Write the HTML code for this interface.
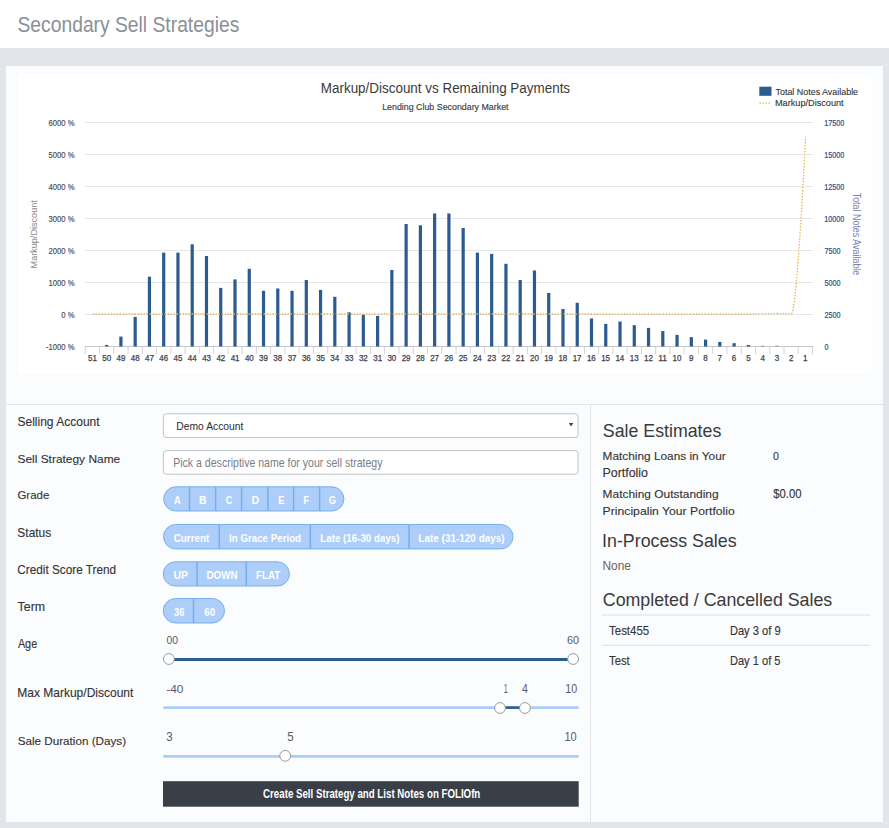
<!DOCTYPE html>
<html><head><meta charset="utf-8"><title>Secondary Sell Strategies</title>
<style>
html,body{margin:0;padding:0;background:#e4e5ea;width:889px;height:828px;overflow:hidden}
svg text{font-family:"Liberation Sans",sans-serif}
</style></head><body>
<svg width="889" height="828" viewBox="0 0 889 828" style="display:block">
<rect x="0" y="0" width="889" height="828" fill="#e4e5ea"/>
<rect x="0" y="0" width="889" height="48" fill="#ffffff"/>
<rect x="6" y="66" width="877" height="756" fill="#fbfcfe"/>
<rect x="18" y="74" width="853.5" height="300" fill="#ffffff"/>
<rect x="6" y="404" width="877" height="1" fill="#e2e4e9"/>
<rect x="590" y="405" width="1" height="417" fill="#e2e4e9"/>
<text x="17.52" y="31.50" font-size="21.37" fill="#8b9097" textLength="221.77" lengthAdjust="spacingAndGlyphs">Secondary Sell Strategies</text>
<rect x="85.27" y="122.00" width="727.53" height="1" fill="#e6e6e6"/>
<rect x="85.27" y="154.00" width="727.53" height="1" fill="#e6e6e6"/>
<rect x="85.27" y="186.00" width="727.53" height="1" fill="#e6e6e6"/>
<rect x="85.27" y="218.00" width="727.53" height="1" fill="#e6e6e6"/>
<rect x="85.27" y="250.00" width="727.53" height="1" fill="#e6e6e6"/>
<rect x="85.27" y="282.00" width="727.53" height="1" fill="#e6e6e6"/>
<rect x="85.27" y="314.00" width="727.53" height="1" fill="#e6e6e6"/>
<rect x="84.77" y="346" width="728.53" height="1" fill="#c4c6cc"/>
<rect x="84.77" y="347" width="1" height="7" fill="#d2d4da"/>
<rect x="99.03" y="347" width="1" height="7" fill="#d2d4da"/>
<rect x="113.29" y="347" width="1" height="7" fill="#d2d4da"/>
<rect x="127.55" y="347" width="1" height="7" fill="#d2d4da"/>
<rect x="141.81" y="347" width="1" height="7" fill="#d2d4da"/>
<rect x="156.07" y="347" width="1" height="7" fill="#d2d4da"/>
<rect x="170.33" y="347" width="1" height="7" fill="#d2d4da"/>
<rect x="184.59" y="347" width="1" height="7" fill="#d2d4da"/>
<rect x="198.85" y="347" width="1" height="7" fill="#d2d4da"/>
<rect x="213.11" y="347" width="1" height="7" fill="#d2d4da"/>
<rect x="227.37" y="347" width="1" height="7" fill="#d2d4da"/>
<rect x="241.63" y="347" width="1" height="7" fill="#d2d4da"/>
<rect x="255.89" y="347" width="1" height="7" fill="#d2d4da"/>
<rect x="270.15" y="347" width="1" height="7" fill="#d2d4da"/>
<rect x="284.41" y="347" width="1" height="7" fill="#d2d4da"/>
<rect x="298.67" y="347" width="1" height="7" fill="#d2d4da"/>
<rect x="312.93" y="347" width="1" height="7" fill="#d2d4da"/>
<rect x="327.19" y="347" width="1" height="7" fill="#d2d4da"/>
<rect x="341.45" y="347" width="1" height="7" fill="#d2d4da"/>
<rect x="355.71" y="347" width="1" height="7" fill="#d2d4da"/>
<rect x="369.97" y="347" width="1" height="7" fill="#d2d4da"/>
<rect x="384.23" y="347" width="1" height="7" fill="#d2d4da"/>
<rect x="398.49" y="347" width="1" height="7" fill="#d2d4da"/>
<rect x="412.75" y="347" width="1" height="7" fill="#d2d4da"/>
<rect x="427.01" y="347" width="1" height="7" fill="#d2d4da"/>
<rect x="441.27" y="347" width="1" height="7" fill="#d2d4da"/>
<rect x="455.53" y="347" width="1" height="7" fill="#d2d4da"/>
<rect x="469.79" y="347" width="1" height="7" fill="#d2d4da"/>
<rect x="484.05" y="347" width="1" height="7" fill="#d2d4da"/>
<rect x="498.31" y="347" width="1" height="7" fill="#d2d4da"/>
<rect x="512.57" y="347" width="1" height="7" fill="#d2d4da"/>
<rect x="526.83" y="347" width="1" height="7" fill="#d2d4da"/>
<rect x="541.09" y="347" width="1" height="7" fill="#d2d4da"/>
<rect x="555.35" y="347" width="1" height="7" fill="#d2d4da"/>
<rect x="569.61" y="347" width="1" height="7" fill="#d2d4da"/>
<rect x="583.87" y="347" width="1" height="7" fill="#d2d4da"/>
<rect x="598.13" y="347" width="1" height="7" fill="#d2d4da"/>
<rect x="612.39" y="347" width="1" height="7" fill="#d2d4da"/>
<rect x="626.65" y="347" width="1" height="7" fill="#d2d4da"/>
<rect x="640.91" y="347" width="1" height="7" fill="#d2d4da"/>
<rect x="655.17" y="347" width="1" height="7" fill="#d2d4da"/>
<rect x="669.43" y="347" width="1" height="7" fill="#d2d4da"/>
<rect x="683.69" y="347" width="1" height="7" fill="#d2d4da"/>
<rect x="697.95" y="347" width="1" height="7" fill="#d2d4da"/>
<rect x="712.21" y="347" width="1" height="7" fill="#d2d4da"/>
<rect x="726.47" y="347" width="1" height="7" fill="#d2d4da"/>
<rect x="740.73" y="347" width="1" height="7" fill="#d2d4da"/>
<rect x="754.99" y="347" width="1" height="7" fill="#d2d4da"/>
<rect x="769.25" y="347" width="1" height="7" fill="#d2d4da"/>
<rect x="783.51" y="347" width="1" height="7" fill="#d2d4da"/>
<rect x="797.77" y="347" width="1" height="7" fill="#d2d4da"/>
<rect x="812.03" y="347" width="1" height="7" fill="#d2d4da"/>
<rect x="105.06" y="344.90" width="3.2" height="1.60" fill="#2b5b8f" fill-opacity="1.0"/>
<rect x="119.32" y="336.60" width="3.2" height="9.90" fill="#2b5b8f" fill-opacity="1.0"/>
<rect x="133.58" y="316.90" width="3.2" height="29.60" fill="#2b5b8f" fill-opacity="1.0"/>
<rect x="147.84" y="276.70" width="3.2" height="69.80" fill="#2b5b8f" fill-opacity="1.0"/>
<rect x="162.10" y="252.60" width="3.2" height="93.90" fill="#2b5b8f" fill-opacity="1.0"/>
<rect x="176.36" y="252.60" width="3.2" height="93.90" fill="#2b5b8f" fill-opacity="1.0"/>
<rect x="190.62" y="244.30" width="3.2" height="102.20" fill="#2b5b8f" fill-opacity="1.0"/>
<rect x="204.88" y="256.00" width="3.2" height="90.50" fill="#2b5b8f" fill-opacity="1.0"/>
<rect x="219.14" y="287.90" width="3.2" height="58.60" fill="#2b5b8f" fill-opacity="1.0"/>
<rect x="233.40" y="279.40" width="3.2" height="67.10" fill="#2b5b8f" fill-opacity="1.0"/>
<rect x="247.66" y="268.80" width="3.2" height="77.70" fill="#2b5b8f" fill-opacity="1.0"/>
<rect x="261.92" y="290.80" width="3.2" height="55.70" fill="#2b5b8f" fill-opacity="1.0"/>
<rect x="276.18" y="288.50" width="3.2" height="58.00" fill="#2b5b8f" fill-opacity="1.0"/>
<rect x="290.44" y="290.80" width="3.2" height="55.70" fill="#2b5b8f" fill-opacity="1.0"/>
<rect x="304.70" y="280.00" width="3.2" height="66.50" fill="#2b5b8f" fill-opacity="1.0"/>
<rect x="318.96" y="289.90" width="3.2" height="56.60" fill="#2b5b8f" fill-opacity="1.0"/>
<rect x="333.22" y="296.80" width="3.2" height="49.70" fill="#2b5b8f" fill-opacity="1.0"/>
<rect x="347.48" y="312.30" width="3.2" height="34.20" fill="#2b5b8f" fill-opacity="1.0"/>
<rect x="361.74" y="314.80" width="3.2" height="31.70" fill="#2b5b8f" fill-opacity="1.0"/>
<rect x="376.00" y="315.90" width="3.2" height="30.60" fill="#2b5b8f" fill-opacity="1.0"/>
<rect x="390.26" y="270.00" width="3.2" height="76.50" fill="#2b5b8f" fill-opacity="1.0"/>
<rect x="404.52" y="224.00" width="3.2" height="122.50" fill="#2b5b8f" fill-opacity="1.0"/>
<rect x="418.78" y="225.30" width="3.2" height="121.20" fill="#2b5b8f" fill-opacity="1.0"/>
<rect x="433.04" y="213.50" width="3.2" height="133.00" fill="#2b5b8f" fill-opacity="1.0"/>
<rect x="447.30" y="213.50" width="3.2" height="133.00" fill="#2b5b8f" fill-opacity="1.0"/>
<rect x="461.56" y="228.00" width="3.2" height="118.50" fill="#2b5b8f" fill-opacity="1.0"/>
<rect x="475.82" y="252.60" width="3.2" height="93.90" fill="#2b5b8f" fill-opacity="1.0"/>
<rect x="490.08" y="253.90" width="3.2" height="92.60" fill="#2b5b8f" fill-opacity="1.0"/>
<rect x="504.34" y="263.80" width="3.2" height="82.70" fill="#2b5b8f" fill-opacity="1.0"/>
<rect x="518.60" y="280.00" width="3.2" height="66.50" fill="#2b5b8f" fill-opacity="1.0"/>
<rect x="532.86" y="270.50" width="3.2" height="76.00" fill="#2b5b8f" fill-opacity="1.0"/>
<rect x="547.12" y="293.00" width="3.2" height="53.50" fill="#2b5b8f" fill-opacity="1.0"/>
<rect x="561.38" y="309.00" width="3.2" height="37.50" fill="#2b5b8f" fill-opacity="1.0"/>
<rect x="575.64" y="302.80" width="3.2" height="43.70" fill="#2b5b8f" fill-opacity="1.0"/>
<rect x="589.90" y="318.50" width="3.2" height="28.00" fill="#2b5b8f" fill-opacity="1.0"/>
<rect x="604.16" y="323.90" width="3.2" height="22.60" fill="#2b5b8f" fill-opacity="1.0"/>
<rect x="618.42" y="321.50" width="3.2" height="25.00" fill="#2b5b8f" fill-opacity="1.0"/>
<rect x="632.68" y="325.20" width="3.2" height="21.30" fill="#2b5b8f" fill-opacity="1.0"/>
<rect x="646.94" y="327.90" width="3.2" height="18.60" fill="#2b5b8f" fill-opacity="1.0"/>
<rect x="661.20" y="331.10" width="3.2" height="15.40" fill="#2b5b8f" fill-opacity="1.0"/>
<rect x="675.46" y="334.90" width="3.2" height="11.60" fill="#2b5b8f" fill-opacity="1.0"/>
<rect x="689.72" y="337.10" width="3.2" height="9.40" fill="#2b5b8f" fill-opacity="1.0"/>
<rect x="703.98" y="339.60" width="3.2" height="6.90" fill="#2b5b8f" fill-opacity="1.0"/>
<rect x="718.24" y="341.90" width="3.2" height="4.60" fill="#2b5b8f" fill-opacity="1.0"/>
<rect x="732.50" y="343.20" width="3.2" height="3.30" fill="#2b5b8f" fill-opacity="1.0"/>
<rect x="746.76" y="345.00" width="3.2" height="1.50" fill="#2b5b8f" fill-opacity="1.0"/>
<rect x="761.02" y="345.50" width="3.2" height="1.00" fill="#2b5b8f" fill-opacity="0.45"/>
<rect x="775.28" y="345.50" width="3.2" height="1.00" fill="#2b5b8f" fill-opacity="0.45"/>
<rect x="789.54" y="346.00" width="3.2" height="0.50" fill="#2b5b8f" fill-opacity="0.15"/>
<path d="M92.60,314.00 C92.60,314.00 101.16,314.00 106.86,314.00 C112.56,314.00 115.42,314.00 121.12,314.00 C126.82,314.00 129.68,314.00 135.38,314.00 C141.08,314.00 143.94,314.00 149.64,314.00 C155.34,314.00 158.20,314.00 163.90,314.00 C169.60,314.00 172.46,314.00 178.16,314.00 C183.86,314.00 186.72,314.00 192.42,314.00 C198.12,314.00 200.98,314.00 206.68,314.00 C212.38,314.00 215.24,314.00 220.94,314.00 C226.64,314.00 229.50,314.00 235.20,314.00 C240.90,314.00 243.76,314.00 249.46,314.00 C255.16,314.00 258.02,314.00 263.72,314.00 C269.42,314.00 272.28,314.00 277.98,314.00 C283.68,314.00 286.54,314.00 292.24,314.00 C297.94,314.00 300.80,314.00 306.50,314.00 C312.20,314.00 315.06,314.00 320.76,314.00 C326.46,314.00 329.32,314.00 335.02,314.00 C340.72,314.00 343.58,314.00 349.28,314.00 C354.98,314.00 357.84,314.00 363.54,314.00 C369.24,314.00 372.10,314.00 377.80,314.00 C383.50,314.00 386.36,314.00 392.06,314.00 C397.76,314.00 400.62,314.00 406.32,314.00 C412.02,314.00 414.88,314.00 420.58,314.00 C426.28,314.00 429.14,314.00 434.84,314.00 C440.54,314.00 443.40,314.00 449.10,314.00 C454.80,314.00 457.66,314.00 463.36,314.00 C469.06,314.00 471.92,314.00 477.62,314.00 C483.32,314.00 486.18,314.00 491.88,314.00 C497.58,314.00 500.44,314.00 506.14,314.00 C511.84,314.00 514.70,314.00 520.40,314.00 C526.10,314.00 528.96,314.00 534.66,314.00 C540.36,314.00 543.22,314.00 548.92,314.00 C554.62,314.00 557.48,314.00 563.18,314.00 C568.88,314.00 571.74,314.00 577.44,314.00 C583.14,314.00 586.00,314.00 591.70,314.00 C597.40,314.00 600.26,314.00 605.96,314.00 C611.66,314.00 614.52,314.00 620.22,314.00 C625.92,314.00 628.78,314.00 634.48,314.00 C640.18,314.00 643.04,314.00 648.74,314.00 C654.44,314.00 657.30,314.00 663.00,314.00 C668.70,314.00 671.56,314.00 677.26,314.00 C682.96,314.00 685.82,314.00 691.52,314.00 C697.22,314.00 700.08,314.00 705.78,314.00 C711.48,314.00 714.34,314.00 720.04,314.00 C725.74,314.00 728.60,314.00 734.30,314.00 C740.00,314.00 742.86,314.00 748.56,314.00 C754.26,314.00 757.12,313.90 762.82,313.80 C768.52,313.70 771.38,313.50 777.08,313.50 C782.78,313.50 785.64,313.90 791.34,313.90 C797.04,313.90 805.60,136.50 805.60,136.50" fill="none" stroke="#e8b347" stroke-width="1.3" stroke-dasharray="1.4,1.6"/>
<text x="48.62" y="126.10" font-size="8.28" fill="#4a4a4a" textLength="25.85" lengthAdjust="spacingAndGlyphs" stroke="#4a4a4a" stroke-width="0.15">6000 %</text>
<text x="48.62" y="158.10" font-size="8.28" fill="#4a4a4a" textLength="25.85" lengthAdjust="spacingAndGlyphs" stroke="#4a4a4a" stroke-width="0.15">5000 %</text>
<text x="48.62" y="190.10" font-size="8.28" fill="#4a4a4a" textLength="25.85" lengthAdjust="spacingAndGlyphs" stroke="#4a4a4a" stroke-width="0.15">4000 %</text>
<text x="48.62" y="222.10" font-size="8.28" fill="#4a4a4a" textLength="25.85" lengthAdjust="spacingAndGlyphs" stroke="#4a4a4a" stroke-width="0.15">3000 %</text>
<text x="48.62" y="254.10" font-size="8.28" fill="#4a4a4a" textLength="25.85" lengthAdjust="spacingAndGlyphs" stroke="#4a4a4a" stroke-width="0.15">2000 %</text>
<text x="48.62" y="286.10" font-size="8.28" fill="#4a4a4a" textLength="25.85" lengthAdjust="spacingAndGlyphs" stroke="#4a4a4a" stroke-width="0.15">1000 %</text>
<text x="61.34" y="318.10" font-size="8.28" fill="#4a4a4a" textLength="13.13" lengthAdjust="spacingAndGlyphs" stroke="#4a4a4a" stroke-width="0.15">0 %</text>
<text x="46.08" y="350.10" font-size="8.28" fill="#4a4a4a" textLength="28.39" lengthAdjust="spacingAndGlyphs" stroke="#4a4a4a" stroke-width="0.15">-1000 %</text>
<text x="824.25" y="126.10" font-size="8.28" fill="#2f5088" textLength="20.04" lengthAdjust="spacingAndGlyphs" stroke="#2f5088" stroke-width="0.2">17500</text>
<text x="824.25" y="158.10" font-size="8.28" fill="#2f5088" textLength="20.04" lengthAdjust="spacingAndGlyphs" stroke="#2f5088" stroke-width="0.2">15000</text>
<text x="824.25" y="190.10" font-size="8.28" fill="#2f5088" textLength="20.04" lengthAdjust="spacingAndGlyphs" stroke="#2f5088" stroke-width="0.2">12500</text>
<text x="824.25" y="222.10" font-size="8.28" fill="#2f5088" textLength="20.04" lengthAdjust="spacingAndGlyphs" stroke="#2f5088" stroke-width="0.2">10000</text>
<text x="824.43" y="254.10" font-size="8.28" fill="#2f5088" textLength="16.03" lengthAdjust="spacingAndGlyphs" stroke="#2f5088" stroke-width="0.2">7500</text>
<text x="824.51" y="286.10" font-size="8.28" fill="#2f5088" textLength="16.03" lengthAdjust="spacingAndGlyphs" stroke="#2f5088" stroke-width="0.2">5000</text>
<text x="824.44" y="318.10" font-size="8.28" fill="#2f5088" textLength="16.03" lengthAdjust="spacingAndGlyphs" stroke="#2f5088" stroke-width="0.2">2500</text>
<text x="824.52" y="350.10" font-size="8.28" fill="#2f5088" textLength="4.01" lengthAdjust="spacingAndGlyphs" stroke="#2f5088" stroke-width="0.2">0</text>
<text x="88.00" y="361.10" font-size="8.58" fill="#3e3e4c" textLength="8.87" lengthAdjust="spacingAndGlyphs" stroke="#3e3e4c" stroke-width="0.25">51</text>
<text x="102.22" y="361.10" font-size="8.58" fill="#3e3e4c" textLength="8.87" lengthAdjust="spacingAndGlyphs" stroke="#3e3e4c" stroke-width="0.25">50</text>
<text x="116.58" y="361.10" font-size="8.58" fill="#3e3e4c" textLength="8.87" lengthAdjust="spacingAndGlyphs" stroke="#3e3e4c" stroke-width="0.25">49</text>
<text x="130.83" y="361.10" font-size="8.58" fill="#3e3e4c" textLength="8.87" lengthAdjust="spacingAndGlyphs" stroke="#3e3e4c" stroke-width="0.25">48</text>
<text x="145.11" y="361.10" font-size="8.58" fill="#3e3e4c" textLength="8.87" lengthAdjust="spacingAndGlyphs" stroke="#3e3e4c" stroke-width="0.25">47</text>
<text x="159.35" y="361.10" font-size="8.58" fill="#3e3e4c" textLength="8.87" lengthAdjust="spacingAndGlyphs" stroke="#3e3e4c" stroke-width="0.25">46</text>
<text x="173.60" y="361.10" font-size="8.58" fill="#3e3e4c" textLength="8.87" lengthAdjust="spacingAndGlyphs" stroke="#3e3e4c" stroke-width="0.25">45</text>
<text x="187.81" y="361.10" font-size="8.58" fill="#3e3e4c" textLength="8.87" lengthAdjust="spacingAndGlyphs" stroke="#3e3e4c" stroke-width="0.25">44</text>
<text x="202.13" y="361.10" font-size="8.58" fill="#3e3e4c" textLength="8.87" lengthAdjust="spacingAndGlyphs" stroke="#3e3e4c" stroke-width="0.25">43</text>
<text x="216.41" y="361.10" font-size="8.58" fill="#3e3e4c" textLength="8.87" lengthAdjust="spacingAndGlyphs" stroke="#3e3e4c" stroke-width="0.25">42</text>
<text x="230.67" y="361.10" font-size="8.58" fill="#3e3e4c" textLength="8.87" lengthAdjust="spacingAndGlyphs" stroke="#3e3e4c" stroke-width="0.25">41</text>
<text x="244.89" y="361.10" font-size="8.58" fill="#3e3e4c" textLength="8.87" lengthAdjust="spacingAndGlyphs" stroke="#3e3e4c" stroke-width="0.25">40</text>
<text x="259.12" y="361.10" font-size="8.58" fill="#3e3e4c" textLength="8.87" lengthAdjust="spacingAndGlyphs" stroke="#3e3e4c" stroke-width="0.25">39</text>
<text x="273.37" y="361.10" font-size="8.58" fill="#3e3e4c" textLength="8.87" lengthAdjust="spacingAndGlyphs" stroke="#3e3e4c" stroke-width="0.25">38</text>
<text x="287.65" y="361.10" font-size="8.58" fill="#3e3e4c" textLength="8.87" lengthAdjust="spacingAndGlyphs" stroke="#3e3e4c" stroke-width="0.25">37</text>
<text x="301.89" y="361.10" font-size="8.58" fill="#3e3e4c" textLength="8.87" lengthAdjust="spacingAndGlyphs" stroke="#3e3e4c" stroke-width="0.25">36</text>
<text x="316.14" y="361.10" font-size="8.58" fill="#3e3e4c" textLength="8.87" lengthAdjust="spacingAndGlyphs" stroke="#3e3e4c" stroke-width="0.25">35</text>
<text x="330.35" y="361.10" font-size="8.58" fill="#3e3e4c" textLength="8.87" lengthAdjust="spacingAndGlyphs" stroke="#3e3e4c" stroke-width="0.25">34</text>
<text x="344.67" y="361.10" font-size="8.58" fill="#3e3e4c" textLength="8.87" lengthAdjust="spacingAndGlyphs" stroke="#3e3e4c" stroke-width="0.25">33</text>
<text x="358.95" y="361.10" font-size="8.58" fill="#3e3e4c" textLength="8.87" lengthAdjust="spacingAndGlyphs" stroke="#3e3e4c" stroke-width="0.25">32</text>
<text x="373.21" y="361.10" font-size="8.58" fill="#3e3e4c" textLength="8.87" lengthAdjust="spacingAndGlyphs" stroke="#3e3e4c" stroke-width="0.25">31</text>
<text x="387.43" y="361.10" font-size="8.58" fill="#3e3e4c" textLength="8.87" lengthAdjust="spacingAndGlyphs" stroke="#3e3e4c" stroke-width="0.25">30</text>
<text x="401.67" y="361.10" font-size="8.58" fill="#3e3e4c" textLength="8.87" lengthAdjust="spacingAndGlyphs" stroke="#3e3e4c" stroke-width="0.25">29</text>
<text x="415.92" y="361.10" font-size="8.58" fill="#3e3e4c" textLength="8.87" lengthAdjust="spacingAndGlyphs" stroke="#3e3e4c" stroke-width="0.25">28</text>
<text x="430.20" y="361.10" font-size="8.58" fill="#3e3e4c" textLength="8.87" lengthAdjust="spacingAndGlyphs" stroke="#3e3e4c" stroke-width="0.25">27</text>
<text x="444.44" y="361.10" font-size="8.58" fill="#3e3e4c" textLength="8.87" lengthAdjust="spacingAndGlyphs" stroke="#3e3e4c" stroke-width="0.25">26</text>
<text x="458.69" y="361.10" font-size="8.58" fill="#3e3e4c" textLength="8.87" lengthAdjust="spacingAndGlyphs" stroke="#3e3e4c" stroke-width="0.25">25</text>
<text x="472.90" y="361.10" font-size="8.58" fill="#3e3e4c" textLength="8.87" lengthAdjust="spacingAndGlyphs" stroke="#3e3e4c" stroke-width="0.25">24</text>
<text x="487.22" y="361.10" font-size="8.58" fill="#3e3e4c" textLength="8.87" lengthAdjust="spacingAndGlyphs" stroke="#3e3e4c" stroke-width="0.25">23</text>
<text x="501.50" y="361.10" font-size="8.58" fill="#3e3e4c" textLength="8.87" lengthAdjust="spacingAndGlyphs" stroke="#3e3e4c" stroke-width="0.25">22</text>
<text x="515.76" y="361.10" font-size="8.58" fill="#3e3e4c" textLength="8.87" lengthAdjust="spacingAndGlyphs" stroke="#3e3e4c" stroke-width="0.25">21</text>
<text x="529.98" y="361.10" font-size="8.58" fill="#3e3e4c" textLength="8.87" lengthAdjust="spacingAndGlyphs" stroke="#3e3e4c" stroke-width="0.25">20</text>
<text x="544.17" y="361.10" font-size="8.58" fill="#3e3e4c" textLength="8.87" lengthAdjust="spacingAndGlyphs" stroke="#3e3e4c" stroke-width="0.25">19</text>
<text x="558.41" y="361.10" font-size="8.58" fill="#3e3e4c" textLength="8.87" lengthAdjust="spacingAndGlyphs" stroke="#3e3e4c" stroke-width="0.25">18</text>
<text x="572.70" y="361.10" font-size="8.58" fill="#3e3e4c" textLength="8.87" lengthAdjust="spacingAndGlyphs" stroke="#3e3e4c" stroke-width="0.25">17</text>
<text x="586.94" y="361.10" font-size="8.58" fill="#3e3e4c" textLength="8.87" lengthAdjust="spacingAndGlyphs" stroke="#3e3e4c" stroke-width="0.25">16</text>
<text x="601.19" y="361.10" font-size="8.58" fill="#3e3e4c" textLength="8.87" lengthAdjust="spacingAndGlyphs" stroke="#3e3e4c" stroke-width="0.25">15</text>
<text x="615.40" y="361.10" font-size="8.58" fill="#3e3e4c" textLength="8.87" lengthAdjust="spacingAndGlyphs" stroke="#3e3e4c" stroke-width="0.25">14</text>
<text x="629.72" y="361.10" font-size="8.58" fill="#3e3e4c" textLength="8.87" lengthAdjust="spacingAndGlyphs" stroke="#3e3e4c" stroke-width="0.25">13</text>
<text x="644.00" y="361.10" font-size="8.58" fill="#3e3e4c" textLength="8.87" lengthAdjust="spacingAndGlyphs" stroke="#3e3e4c" stroke-width="0.25">12</text>
<text x="658.26" y="361.10" font-size="8.58" fill="#3e3e4c" textLength="8.87" lengthAdjust="spacingAndGlyphs" stroke="#3e3e4c" stroke-width="0.25">11</text>
<text x="672.48" y="361.10" font-size="8.58" fill="#3e3e4c" textLength="8.87" lengthAdjust="spacingAndGlyphs" stroke="#3e3e4c" stroke-width="0.25">10</text>
<text x="689.10" y="361.10" font-size="8.58" fill="#3e3e4c" textLength="4.44" lengthAdjust="spacingAndGlyphs" stroke="#3e3e4c" stroke-width="0.25">9</text>
<text x="703.36" y="361.10" font-size="8.58" fill="#3e3e4c" textLength="4.44" lengthAdjust="spacingAndGlyphs" stroke="#3e3e4c" stroke-width="0.25">8</text>
<text x="717.62" y="361.10" font-size="8.58" fill="#3e3e4c" textLength="4.44" lengthAdjust="spacingAndGlyphs" stroke="#3e3e4c" stroke-width="0.25">7</text>
<text x="731.86" y="361.10" font-size="8.58" fill="#3e3e4c" textLength="4.44" lengthAdjust="spacingAndGlyphs" stroke="#3e3e4c" stroke-width="0.25">6</text>
<text x="746.15" y="361.10" font-size="8.58" fill="#3e3e4c" textLength="4.44" lengthAdjust="spacingAndGlyphs" stroke="#3e3e4c" stroke-width="0.25">5</text>
<text x="760.43" y="361.10" font-size="8.58" fill="#3e3e4c" textLength="4.44" lengthAdjust="spacingAndGlyphs" stroke="#3e3e4c" stroke-width="0.25">4</text>
<text x="774.69" y="361.10" font-size="8.58" fill="#3e3e4c" textLength="4.44" lengthAdjust="spacingAndGlyphs" stroke="#3e3e4c" stroke-width="0.25">3</text>
<text x="788.92" y="361.10" font-size="8.58" fill="#3e3e4c" textLength="4.44" lengthAdjust="spacingAndGlyphs" stroke="#3e3e4c" stroke-width="0.25">2</text>
<text x="803.07" y="361.10" font-size="8.58" fill="#3e3e4c" textLength="4.44" lengthAdjust="spacingAndGlyphs" stroke="#3e3e4c" stroke-width="0.25">1</text>
<text x="320.80" y="93.10" font-size="13.81" fill="#3a3a3a" textLength="249.29" lengthAdjust="spacingAndGlyphs">Markup/Discount vs Remaining Payments</text>
<text x="382.17" y="109.90" font-size="8.72" fill="#3d3d48" textLength="126.39" lengthAdjust="spacingAndGlyphs" stroke="#3d3d48" stroke-width="0.15">Lending Club Secondary Market</text>
<g transform="translate(37.4,268) rotate(-90)"><text x="-0.45" y="0.00" font-size="8.14" fill="#8a8a8a" textLength="68.21" lengthAdjust="spacingAndGlyphs">Markup/Discount</text></g>
<g transform="translate(852.9,192.6) rotate(90)"><text x="0.10" y="0.00" font-size="10.47" fill="#7c86ac" textLength="82.58" lengthAdjust="spacingAndGlyphs">Total Notes Available</text></g>
<rect x="759.3" y="86.7" width="12.2" height="9.1" fill="#2b5b8f"/>
<line x1="759.5" y1="103.2" x2="771" y2="103.2" stroke="#e8b347" stroke-width="1.3" stroke-dasharray="1.4,1.6"/>
<text x="775.50" y="94.90" font-size="9.16" fill="#333333" textLength="82.58" lengthAdjust="spacingAndGlyphs" stroke="#333333" stroke-width="0.1">Total Notes Available</text>
<text x="774.95" y="105.60" font-size="8.87" fill="#333333" textLength="68.72" lengthAdjust="spacingAndGlyphs" stroke="#333333" stroke-width="0.1">Markup/Discount</text>
<text x="17.46" y="426.20" font-size="12.06" fill="#333333" textLength="82.13" lengthAdjust="spacingAndGlyphs" stroke="#333333" stroke-width="0.12">Selling Account</text>
<text x="17.46" y="463.00" font-size="11.19" fill="#333333" textLength="102.77" lengthAdjust="spacingAndGlyphs" stroke="#333333" stroke-width="0.12">Sell Strategy Name</text>
<text x="17.42" y="499.10" font-size="11.63" fill="#333333" textLength="31.89" lengthAdjust="spacingAndGlyphs" stroke="#333333" stroke-width="0.12">Grade</text>
<text x="17.36" y="537.20" font-size="11.92" fill="#333333" textLength="33.87" lengthAdjust="spacingAndGlyphs" stroke="#333333" stroke-width="0.12">Status</text>
<text x="17.31" y="574.40" font-size="11.92" fill="#333333" textLength="98.85" lengthAdjust="spacingAndGlyphs" stroke="#333333" stroke-width="0.12">Credit Score Trend</text>
<text x="17.63" y="611.30" font-size="12.06" fill="#333333" textLength="27.54" lengthAdjust="spacingAndGlyphs" stroke="#333333" stroke-width="0.12">Term</text>
<text x="17.88" y="648.00" font-size="12.06" fill="#333333" textLength="19.30" lengthAdjust="spacingAndGlyphs" stroke="#333333" stroke-width="0.12">Age</text>
<text x="17.21" y="697.40" font-size="11.92" fill="#333333" textLength="116.17" lengthAdjust="spacingAndGlyphs" stroke="#333333" stroke-width="0.12">Max Markup/Discount</text>
<text x="17.67" y="745.10" font-size="11.48" fill="#333333" textLength="108.46" lengthAdjust="spacingAndGlyphs" stroke="#333333" stroke-width="0.12">Sale Duration (Days)</text>
<rect x="163.4" y="413.8" width="414.7" height="23.7" rx="3" fill="#ffffff" stroke="#c2c3c7" stroke-width="1"/>
<path d="M568.8,423 L573.3,423 L571.05,426.6 Z" fill="#444"/>
<text x="176.36" y="430.30" font-size="11.48" fill="#2c2c2c" textLength="67.01" lengthAdjust="spacingAndGlyphs">Demo Account</text>
<rect x="163.4" y="450.6" width="414.7" height="23.6" rx="3" fill="#ffffff" stroke="#c2c3c7" stroke-width="1"/>
<text x="173.23" y="467.40" font-size="12.35" fill="#7a7d85" textLength="209.29" lengthAdjust="spacingAndGlyphs">Pick a descriptive name for your sell strategy</text>
<rect x="163.70" y="486.80" width="180.20" height="24.20" rx="12.10" fill="#aecefa" stroke="#76aeee" stroke-width="1"/>
<rect x="188.75" y="486.80" width="1.5" height="24.20" fill="#76aeee"/>
<rect x="214.85" y="486.80" width="1.5" height="24.20" fill="#76aeee"/>
<rect x="240.85" y="486.80" width="1.5" height="24.20" fill="#76aeee"/>
<rect x="267.15" y="486.80" width="1.5" height="24.20" fill="#76aeee"/>
<rect x="292.85" y="486.80" width="1.5" height="24.20" fill="#76aeee"/>
<rect x="318.85" y="486.80" width="1.5" height="24.20" fill="#76aeee"/>
<text x="173.97" y="504.00" font-size="10.17" fill="#ffffff" textLength="6.67" lengthAdjust="spacingAndGlyphs" font-weight="bold">A</text>
<text x="199.11" y="504.00" font-size="10.17" fill="#ffffff" textLength="7.46" lengthAdjust="spacingAndGlyphs" font-weight="bold">B</text>
<text x="225.74" y="504.00" font-size="10.17" fill="#ffffff" textLength="6.41" lengthAdjust="spacingAndGlyphs" font-weight="bold">C</text>
<text x="251.49" y="504.00" font-size="10.17" fill="#ffffff" textLength="7.65" lengthAdjust="spacingAndGlyphs" font-weight="bold">D</text>
<text x="278.28" y="504.00" font-size="10.17" fill="#ffffff" textLength="6.18" lengthAdjust="spacingAndGlyphs" font-weight="bold">E</text>
<text x="303.49" y="504.00" font-size="10.17" fill="#ffffff" textLength="5.54" lengthAdjust="spacingAndGlyphs" font-weight="bold">F</text>
<text x="328.72" y="504.00" font-size="10.17" fill="#ffffff" textLength="7.26" lengthAdjust="spacingAndGlyphs" font-weight="bold">G</text>
<rect x="163.50" y="524.50" width="349.50" height="24.40" rx="12.20" fill="#aecefa" stroke="#76aeee" stroke-width="1"/>
<rect x="218.55" y="524.50" width="1.5" height="24.40" fill="#76aeee"/>
<rect x="309.55" y="524.50" width="1.5" height="24.40" fill="#76aeee"/>
<rect x="408.25" y="524.50" width="1.5" height="24.40" fill="#76aeee"/>
<text x="173.69" y="542.30" font-size="11.05" fill="#ffffff" textLength="35.73" lengthAdjust="spacingAndGlyphs" font-weight="bold">Current</text>
<text x="229.05" y="542.30" font-size="11.05" fill="#ffffff" textLength="71.99" lengthAdjust="spacingAndGlyphs" font-weight="bold">In Grace Period</text>
<text x="320.35" y="542.30" font-size="11.05" fill="#ffffff" textLength="79.14" lengthAdjust="spacingAndGlyphs" font-weight="bold">Late (16-30 days)</text>
<text x="418.33" y="542.30" font-size="11.05" fill="#ffffff" textLength="86.36" lengthAdjust="spacingAndGlyphs" font-weight="bold">Late (31-120 days)</text>
<rect x="163.30" y="561.80" width="126.10" height="24.20" rx="12.10" fill="#aecefa" stroke="#76aeee" stroke-width="1"/>
<rect x="196.25" y="561.80" width="1.5" height="24.20" fill="#76aeee"/>
<rect x="245.55" y="561.80" width="1.5" height="24.20" fill="#76aeee"/>
<text x="173.57" y="578.90" font-size="10.47" fill="#ffffff" textLength="14.48" lengthAdjust="spacingAndGlyphs" font-weight="bold">UP</text>
<text x="206.54" y="578.90" font-size="10.47" fill="#ffffff" textLength="31.02" lengthAdjust="spacingAndGlyphs" font-weight="bold">DOWN</text>
<text x="256.07" y="578.90" font-size="10.47" fill="#ffffff" textLength="24.24" lengthAdjust="spacingAndGlyphs" font-weight="bold">FLAT</text>
<rect x="163.30" y="598.50" width="61.20" height="24.50" rx="12.25" fill="#aecefa" stroke="#76aeee" stroke-width="1"/>
<rect x="192.75" y="598.50" width="1.5" height="24.50" fill="#76aeee"/>
<text x="173.98" y="616.10" font-size="11.34" fill="#ffffff" textLength="10.46" lengthAdjust="spacingAndGlyphs" font-weight="bold">36</text>
<text x="204.34" y="616.10" font-size="11.34" fill="#ffffff" textLength="10.86" lengthAdjust="spacingAndGlyphs" font-weight="bold">60</text>
<text x="166.50" y="643.90" font-size="11.63" fill="#5a5a66" textLength="11.51" lengthAdjust="spacingAndGlyphs">00</text>
<text x="566.94" y="644.00" font-size="11.63" fill="#5a5a66" textLength="12.18" lengthAdjust="spacingAndGlyphs">60</text>
<rect x="168.9" y="658" width="404.2" height="3" fill="#2d5d8e"/>
<circle cx="168.90" cy="659.00" r="5.4" fill="#ffffff" stroke="#9a9a9a" stroke-width="1"/>
<circle cx="573.10" cy="659.00" r="5.4" fill="#ffffff" stroke="#9a9a9a" stroke-width="1"/>
<text x="166.27" y="693.00" font-size="11.77" fill="#5a5a66" textLength="17.19" lengthAdjust="spacingAndGlyphs">-40</text>
<text x="503.75" y="693.00" font-size="12.06" fill="#5a5a66" textLength="4.00" lengthAdjust="spacingAndGlyphs">1</text>
<text x="521.96" y="693.00" font-size="12.06" fill="#5a5a66" textLength="5.85" lengthAdjust="spacingAndGlyphs">4</text>
<text x="565.29" y="693.00" font-size="12.06" fill="#5a5a66" textLength="11.83" lengthAdjust="spacingAndGlyphs">10</text>
<rect x="163" y="706.3" width="415.8" height="2.6" rx="1.3" fill="#abcdf9"/>
<rect x="500" y="706.3" width="24.9" height="2.6" fill="#2d5d8e"/>
<circle cx="500.00" cy="708.00" r="5.4" fill="#ffffff" stroke="#9a9a9a" stroke-width="1"/>
<circle cx="524.90" cy="708.00" r="5.4" fill="#ffffff" stroke="#9a9a9a" stroke-width="1"/>
<text x="166.16" y="741.30" font-size="11.92" fill="#5a5a66" textLength="6.45" lengthAdjust="spacingAndGlyphs">3</text>
<text x="287.14" y="741.30" font-size="11.92" fill="#5a5a66" textLength="6.45" lengthAdjust="spacingAndGlyphs">5</text>
<text x="564.46" y="741.30" font-size="11.92" fill="#5a5a66" textLength="12.27" lengthAdjust="spacingAndGlyphs">10</text>
<rect x="163" y="755" width="415.8" height="2.8" rx="1.4" fill="#abcdf9"/>
<circle cx="285.20" cy="755.80" r="5.4" fill="#ffffff" stroke="#9a9a9a" stroke-width="1"/>
<rect x="163" y="781.2" width="415.7" height="25.5" fill="#3a3e47"/>
<text x="263.10" y="798.30" font-size="11.92" fill="#ffffff" textLength="217.20" lengthAdjust="spacingAndGlyphs" font-weight="bold">Create Sell Strategy and List Notes on FOLIOfn</text>
<text x="602.79" y="436.90" font-size="18.31" fill="#3a3a3a" textLength="118.55" lengthAdjust="spacingAndGlyphs">Sale Estimates</text>
<text x="602.64" y="460.00" font-size="11.77" fill="#333333" textLength="123.06" lengthAdjust="spacingAndGlyphs" stroke="#333333" stroke-width="0.12">Matching Loans in Your</text>
<text x="602.58" y="477.00" font-size="12.06" fill="#333333" textLength="45.44" lengthAdjust="spacingAndGlyphs" stroke="#333333" stroke-width="0.12">Portfolio</text>
<text x="602.62" y="498.40" font-size="11.77" fill="#333333" textLength="115.95" lengthAdjust="spacingAndGlyphs" stroke="#333333" stroke-width="0.12">Matching Outstanding</text>
<text x="602.61" y="514.80" font-size="11.34" fill="#333333" textLength="132.20" lengthAdjust="spacingAndGlyphs" stroke="#333333" stroke-width="0.12">Principalin Your Portfolio</text>
<text x="772.98" y="460.00" font-size="11.77" fill="#333333" textLength="5.93" lengthAdjust="spacingAndGlyphs" stroke="#333333" stroke-width="0.12">0</text>
<text x="773.28" y="498.20" font-size="12.35" fill="#333333" textLength="28.26" lengthAdjust="spacingAndGlyphs" stroke="#333333" stroke-width="0.12">$0.00</text>
<text x="602.06" y="546.80" font-size="17.88" fill="#3a3a3a" textLength="134.59" lengthAdjust="spacingAndGlyphs">In-Process Sales</text>
<text x="602.53" y="570.00" font-size="12.50" fill="#6e5e56" textLength="28.30" lengthAdjust="spacingAndGlyphs">None</text>
<text x="602.80" y="606.10" font-size="18.31" fill="#3a3a3a" textLength="229.45" lengthAdjust="spacingAndGlyphs">Completed / Cancelled Sales</text>
<rect x="601.8" y="614.5" width="268" height="1" fill="#dcdee3"/>
<rect x="601.8" y="644.8" width="268" height="1" fill="#dcdee3"/>
<text x="609.05" y="635.20" font-size="12.06" fill="#333333" textLength="40.12" lengthAdjust="spacingAndGlyphs" stroke="#333333" stroke-width="0.12">Test455</text>
<text x="729.89" y="635.20" font-size="12.06" fill="#333333" textLength="50.74" lengthAdjust="spacingAndGlyphs" stroke="#333333" stroke-width="0.12">Day 3 of 9</text>
<text x="609.06" y="665.10" font-size="12.35" fill="#333333" textLength="20.62" lengthAdjust="spacingAndGlyphs" stroke="#333333" stroke-width="0.12">Test</text>
<text x="729.89" y="665.10" font-size="12.35" fill="#333333" textLength="50.68" lengthAdjust="spacingAndGlyphs" stroke="#333333" stroke-width="0.12">Day 1 of 5</text>
</svg>
</body></html>
